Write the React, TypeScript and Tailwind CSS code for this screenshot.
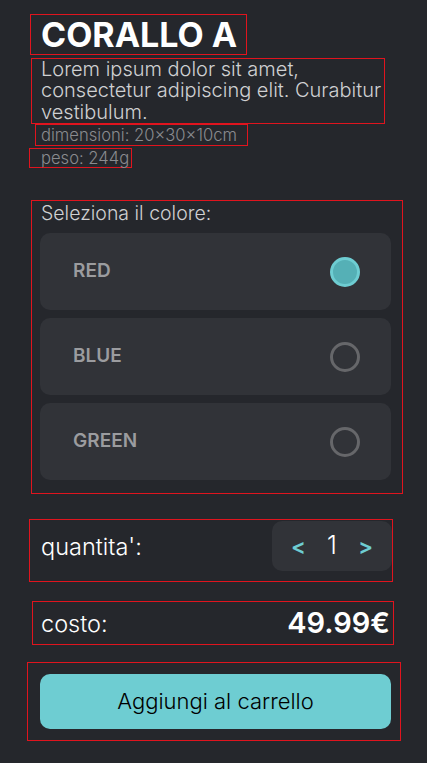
import { useState } from "react";

const COLORS = ["RED", "BLUE", "GREEN"];

function ColorOption({ label, selected, onSelect }: { label: string; selected: boolean; onSelect: () => void }) {
  return (
    <button
      onClick={onSelect}
      className="flex h-[77px] w-[351px] items-center justify-between rounded-[10px] bg-[#313338] pl-[33px] pr-[31px] text-left"
    >
      <span className="text-[19px] font-semibold text-[#9b9c9f]">{label}</span>
      {selected ? (
        <span className="h-[30px] w-[30px] rounded-full border-[3px] border-[#6ecdd2] bg-[#55b0b6]" />
      ) : (
        <span className="h-[30px] w-[30px] rounded-full border-[3px] border-[#66676a]" />
      )}
    </button>
  );
}

export default function App() {
  const [color, setColor] = useState("RED");
  const [qty, setQty] = useState(1);

  return (
    <div className="min-h-screen bg-[#25272c] pt-[14px] font-['Inter',sans-serif]">
      {/* titolo */}
      <div className="ml-[30px] flex h-[41px] w-[217px] items-center border border-[#e0141e] pl-[10px]">
        <h1 className="text-[34px] font-bold leading-none text-white">CORALLO A</h1>
      </div>

      <div className="ml-[31px] mt-[3px] w-[354px] border border-[#e0141e] pl-[9px] text-[20px] font-light leading-[21.4px] text-[#cfd0d2]">
        Lorem ipsum dolor sit amet, consectetur adipiscing elit. Curabitur vestibulum.
      </div>

      <div className="ml-[35px] flex h-[22px] w-[213px] items-center whitespace-nowrap border border-[#e0141e] pl-[5px] text-[16.6px] font-light text-[#8a8b8f]">
        dimensioni: 20×30×10cm
      </div>
      <div className="ml-[29px] mt-[2px] flex h-[20px] w-[103px] items-center whitespace-nowrap border border-[#e0141e] pl-[11px] text-[16.6px] font-light text-[#8a8b8f]">
        peso: 244g
      </div>

      {/* colore */}
      <div className="ml-[31px] mt-[32px] flex h-[294px] w-[372px] flex-col gap-[8px] border border-[#e0141e] pl-[8px]">
        <div className="h-[24px] pl-[1px] text-[19.5px] font-light leading-[24px] text-[#cfd0d2]">Seleziona il colore:</div>
        {COLORS.map((c) => (
          <ColorOption key={c} label={c} selected={color === c} onSelect={() => setColor(c)} />
        ))}
      </div>

      {/* quantita */}
      <div className="ml-[29px] mt-[25px] h-[63px] w-[364px] border border-[#e0141e] pl-[11px] pt-[1px]">
        <div className="flex h-[50px] items-center justify-between">
          <span className="text-[23.5px] font-light text-white">quantita':</span>
          <div className="flex h-[50px] w-[120px] items-center justify-between rounded-[10px] bg-[#313338] px-[19px]">
            <button onClick={() => setQty(Math.max(1, qty - 1))} className="text-[22px] font-semibold text-[#6ecdd2]">
              &lt;
            </button>
            <span className="text-[25px] font-light text-white">{qty}</span>
            <button onClick={() => setQty(qty + 1)} className="text-[22px] font-semibold text-[#6ecdd2]">
              &gt;
            </button>
          </div>
        </div>
      </div>

      {/* costo */}
      <div className="ml-[32px] mt-[19px] flex h-[44px] w-[362px] items-center justify-between border border-[#e0141e] pl-[8px] pr-[3px]">
        <span className="text-[23.5px] font-light text-white">costo:</span>
        <span className="text-[29px] font-semibold text-white">{(49.99 * qty).toFixed(2)}€</span>
      </div>

      {/* carrello */}
      <div className="ml-[27px] mt-[17px] h-[79px] w-[374px] border border-[#e0141e] pl-[12px] pt-[11px]">
        <button className="flex h-[55px] w-[351px] items-center justify-center rounded-[10px] bg-[#6ecdd2] text-[22px] font-light text-black">
          Aggiungi al carrello
        </button>
      </div>
    </div>
  );
}
